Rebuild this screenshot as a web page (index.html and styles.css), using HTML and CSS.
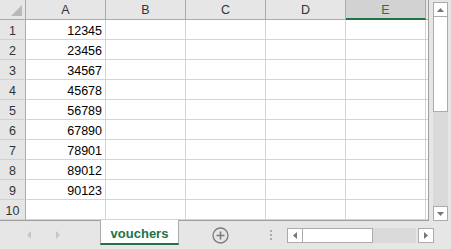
FILE: index.html
```html
<!DOCTYPE html>
<html>

<head>
  <meta charset="utf-8">
  <link rel="stylesheet" href="styles.css">
</head>

<body>
  <div class="app">
    <div class="top">
      <div class="sheet">
        <div class="grid">
          <div class="corner">
            <svg width="25" height="19"><polygon points="11,16 22,16 22,5" fill="#b9b9b9"/></svg>
          </div>
          <div class="colhead">A</div>
          <div class="colhead">B</div>
          <div class="colhead">C</div>
          <div class="colhead">D</div>
          <div class="colhead selected">E</div>
          <div class="colhead edge"></div>

          <div class="rowhead">1</div><div class="cell num">12345</div><div class="cell"></div><div class="cell"></div><div class="cell"></div><div class="cell"></div><div class="cell edge"></div>
          <div class="rowhead">2</div><div class="cell num">23456</div><div class="cell"></div><div class="cell"></div><div class="cell"></div><div class="cell"></div><div class="cell edge"></div>
          <div class="rowhead">3</div><div class="cell num">34567</div><div class="cell"></div><div class="cell"></div><div class="cell"></div><div class="cell"></div><div class="cell edge"></div>
          <div class="rowhead">4</div><div class="cell num">45678</div><div class="cell"></div><div class="cell"></div><div class="cell"></div><div class="cell"></div><div class="cell edge"></div>
          <div class="rowhead">5</div><div class="cell num">56789</div><div class="cell"></div><div class="cell"></div><div class="cell"></div><div class="cell"></div><div class="cell edge"></div>
          <div class="rowhead">6</div><div class="cell num">67890</div><div class="cell"></div><div class="cell"></div><div class="cell"></div><div class="cell"></div><div class="cell edge"></div>
          <div class="rowhead">7</div><div class="cell num">78901</div><div class="cell"></div><div class="cell"></div><div class="cell"></div><div class="cell"></div><div class="cell edge"></div>
          <div class="rowhead">8</div><div class="cell num">89012</div><div class="cell"></div><div class="cell"></div><div class="cell"></div><div class="cell"></div><div class="cell edge"></div>
          <div class="rowhead">9</div><div class="cell num">90123</div><div class="cell"></div><div class="cell"></div><div class="cell"></div><div class="cell"></div><div class="cell edge"></div>
          <div class="rowhead">10</div><div class="cell num"></div><div class="cell"></div><div class="cell"></div><div class="cell"></div><div class="cell"></div><div class="cell edge"></div>
        </div>
      </div>

      <div class="vscroll">
        <div class="sbtn vbtn">
          <svg width="7" height="4"><polygon points="0,4 7,4 3.5,0" fill="#777"/></svg>
        </div>
        <div class="vthumb"></div>
        <div class="vtrack"></div>
        <div class="sbtn vbtn">
          <svg width="7" height="4"><polygon points="0,0 7,0 3.5,4" fill="#777"/></svg>
        </div>
      </div>
    </div>

    <div class="tabbar">
      <div class="nav">
        <svg width="5" height="8"><polygon points="4,0 4,8 0,4" fill="#c6c6c6"/></svg>
        <svg width="5" height="8"><polygon points="0,0 0,8 4,4" fill="#c6c6c6"/></svg>
      </div>
      <div class="tab">vouchers</div>
      <div class="addsheet">
        <svg width="17" height="17">
          <circle cx="8.5" cy="8.5" r="7.5" fill="none" stroke="#7a7a7a" stroke-width="1.3"/>
          <path d="M8.5 4.5v8M4.5 8.5h8" stroke="#7a7a7a" stroke-width="1.6"/>
        </svg>
      </div>
      <div class="dots"><span></span><span></span><span></span></div>
      <div class="hscroll">
        <div class="sbtn hbtn">
          <svg width="4" height="7"><polygon points="4,0 4,7 0,3.5" fill="#777"/></svg>
        </div>
        <div class="hthumb"></div>
        <div class="htrack"></div>
        <div class="sbtn hbtn right">
          <svg width="4" height="7"><polygon points="0,0 0,7 4,3.5" fill="#777"/></svg>
        </div>
      </div>
    </div>
  </div>
</body>

</html>
```

FILE: styles.css
```css
body {
  margin: 0;
  background: #e6e6e6;
  font-family: "Liberation Sans", Arial, sans-serif;
}

.app {
  width: 451px;
  height: 249px;
  overflow: hidden;
}

.top {
  display: flex;
  height: 221px;
}

/* sheet grid */
.sheet {
  width: 428px;
  height: 220px;
  border-right: 1px solid #9f9f9f;
  border-bottom: 1px solid #9f9f9f;
  background: #fff;
  overflow: hidden;
}

.grid {
  display: grid;
  grid-template-columns: 26px repeat(5, 80px) 2px;
  grid-auto-rows: 20px;
  font-size: 12.5px;
}

.grid > div {
  box-sizing: border-box;
}

.corner,
.colhead {
  background: #e6e6e6;
  border-right: 1px solid #ababab;
  border-bottom: 1px solid #ababab;
}

.corner svg {
  display: block;
}

.colhead {
  text-align: center;
  line-height: 21px;
  color: #333;
}

.colhead.selected {
  background: #d2d2d2;
  color: #217346;
  border-bottom: 2px solid #217346;
  line-height: 20px;
}

.colhead.edge {
  border-right: none;
}

.rowhead {
  background: #e6e6e6;
  border-right: 1px solid #ababab;
  border-bottom: 1px solid #d0d0d0;
  text-align: center;
  line-height: 23px;
  color: #333;
}

.cell {
  border-right: 1px solid #d4d4d4;
  border-bottom: 1px solid #d4d4d4;
  line-height: 23px;
  color: #000;
}

.cell.num {
  text-align: right;
  padding-right: 3px;
}

.cell.edge {
  border-right: none;
}

/* scrollbars */
.sbtn {
  box-sizing: border-box;
  background: #fff;
  border: 1px solid #ababab;
  display: flex;
  align-items: center;
  justify-content: center;
}

.sbtn svg {
  display: block;
}

.vscroll {
  width: 22px;
  box-sizing: border-box;
  padding: 2px 3px 0 4px;
  display: flex;
  flex-direction: column;
}

.vbtn {
  height: 15px;
}

.vthumb {
  height: 96px;
  margin-top: -1px;
  box-sizing: border-box;
  background: #fff;
  border: 1px solid #ababab;
}

.vtrack {
  flex: 1;
  background: #dadada;
}

/* sheet tabs */
.tabbar {
  display: flex;
  height: 28px;
}

.nav {
  width: 100px;
  display: flex;
  align-items: center;
  padding-left: 27px;
  gap: 24px;
  box-sizing: border-box;
}

.nav svg {
  display: block;
}

.tab {
  width: 79px;
  height: 25px;
  margin-top: -1px;
  box-sizing: border-box;
  background: #fff;
  border-left: 1px solid #ababab;
  border-right: 1px solid #ababab;
  border-bottom: 2px solid #217346;
  padding-top: 5px;
  line-height: 18px;
  text-align: center;
  font-size: 13px;
  font-weight: bold;
  color: #217346;
}

.addsheet {
  margin-left: 33px;
  display: flex;
  align-items: center;
}

.addsheet svg {
  display: block;
}

.dots {
  margin-left: 41px;
  display: flex;
  flex-direction: column;
  justify-content: center;
  gap: 2px;
}

.dots span {
  display: block;
  width: 2px;
  height: 2px;
  background: #ababab;
}

.hscroll {
  margin-left: 15px;
  display: flex;
  align-self: center;
  height: 15px;
}

.hbtn {
  width: 16px;
}

.hthumb {
  width: 71px;
  margin-left: -1px;
  box-sizing: border-box;
  background: #fff;
  border: 1px solid #ababab;
}

.htrack {
  width: 43px;
  background: #dadada;
}

.hbtn.right {
  margin-left: 2px;
}
```
